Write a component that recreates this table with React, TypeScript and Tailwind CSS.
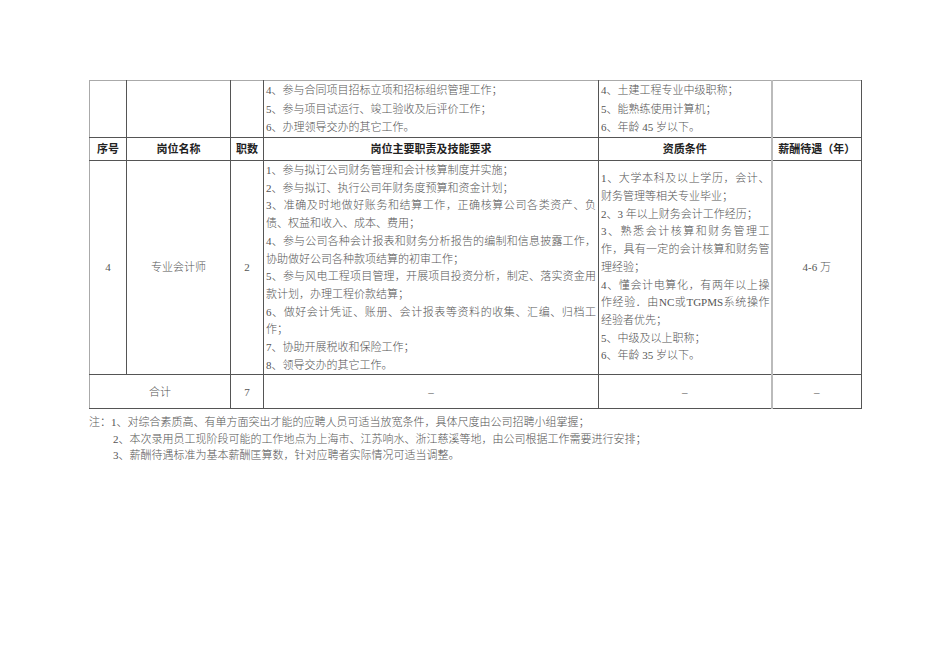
import React from "react";

const L = ({ j, children }: { j?: boolean; children: React.ReactNode }) => (
  <div className={j ? "text-justify [text-align-last:justify]" : "text-left"}>{children}</div>
);

const cell = "border border-[#555] p-0";

export default function App() {
  return (
    <div
      lang="zh-CN"
      className="w-[950px] h-[672px] bg-white pl-[89px] pt-[80px] font-['Liberation_Serif','Noto_Sans_CJK_SC',serif] text-[11px] text-[#555] font-light"
    >
      <table className="table-fixed border-collapse w-[772px]">
        <colgroup>
          <col className="w-[37px]" />
          <col className="w-[104px]" />
          <col className="w-[33px]" />
          <col className="w-[335px]" />
          <col className="w-[173px]" />
          <col className="w-[90px]" />
        </colgroup>
        <tbody>
          <tr className="h-[57px]">
            <td className={`${cell} border-l-[#aaa] border-t-[#aaa]`}></td>
            <td className={`${cell} border-t-[#aaa]`}></td>
            <td className={`${cell} border-t-[#aaa]`}></td>
            <td className={`${cell} border-t-[#aaa] align-middle pl-[2px] leading-[18.6px]`}>
              <L>4、参与合同项目招标立项和招标组织管理工作；</L>
              <L>5、参与项目试运行、竣工验收及后评价工作；</L>
              <L>6、办理领导交办的其它工作。</L>
            </td>
            <td className={`${cell} border-t-[#aaa] align-middle pl-[2px] leading-[18.6px]`}>
              <L>4、土建工程专业中级职称；</L>
              <L>5、能熟练使用计算机；</L>
              <L>6、年龄 45 岁以下。</L>
            </td>
            <td className={`${cell} border-t-[#aaa] border-l-2 border-l-[#bbb]`}></td>
          </tr>
          <tr className="h-[23px] font-bold text-[#222] text-center">
            <td className={`${cell} border-l-[#aaa]`}>序号</td>
            <td className={cell}>岗位名称</td>
            <td className={cell}>职数</td>
            <td className={cell}>岗位主要职责及技能要求</td>
            <td className={cell}>资质条件</td>
            <td className={`${cell} border-l-2 border-l-[#bbb]`}>薪酬待遇（年）</td>
          </tr>
          <tr className="h-[213px]">
            <td className={`${cell} border-l-[#aaa] text-center align-middle`}>4</td>
            <td className={`${cell} text-center align-middle`}>专业会计师</td>
            <td className={`${cell} text-center align-middle`}>2</td>
            <td className={`${cell} align-top pl-[2px] pr-[2px] pt-[1px] leading-[17.7px]`}>
              <L>1、参与拟订公司财务管理和会计核算制度并实施；</L>
              <L>2、参与拟订、执行公司年财务度预算和资金计划；</L>
              <L j>3、准确及时地做好账务和结算工作，正确核算公司各类资产、负</L>
              <L>债、权益和收入、成本、费用；</L>
              <L j>4、参与公司各种会计报表和财务分析报告的编制和信息披露工作，</L>
              <L>协助做好公司各种款项结算的初审工作；</L>
              <L j>5、参与风电工程项目管理，开展项目投资分析，制定、落实资金用</L>
              <L>款计划，办理工程价款结算；</L>
              <L j>6、做好会计凭证、账册、会计报表等资料的收集、汇编、归档工</L>
              <L>作；</L>
              <L>7、协助开展税收和保险工作；</L>
              <L>8、领导交办的其它工作。</L>
            </td>
            <td className={`${cell} align-middle pl-[2px] pr-[1px] leading-[17.7px]`}>
              <L j>1、大学本科及以上学历，会计、</L>
              <L>财务管理等相关专业毕业；</L>
              <L>2、3 年以上财务会计工作经历；</L>
              <L j>3、熟悉会计核算和财务管理工</L>
              <L j>作，具有一定的会计核算和财务管</L>
              <L>理经验；</L>
              <L j>4、懂会计电算化，有两年以上操</L>
              <L j>作经验．由NC或TGPMS系统操作</L>
              <L>经验者优先；</L>
              <L>5、中级及以上职称；</L>
              <L>6、年龄 35 岁以下。</L>
            </td>
            <td className={`${cell} border-l-2 border-l-[#bbb] text-center align-middle`}>4-6 万</td>
          </tr>
          <tr className="h-[34px] text-center">
            <td colSpan={2} className={`${cell} border-l-[#aaa]`}>合计</td>
            <td className={cell}>7</td>
            <td className={cell}>–</td>
            <td className={cell}>–</td>
            <td className={`${cell} border-l-2 border-l-[#bbb]`}>–</td>
          </tr>
        </tbody>
      </table>
      <div className="mt-[5px] leading-[16.5px]">
        <div>注：1、对综合素质高、有单方面突出才能的应聘人员可适当放宽条件，具体尺度由公司招聘小组掌握；</div>
        <div className="pl-[24px]">2、本次录用员工现阶段可能的工作地点为上海市、江苏响水、浙江慈溪等地，由公司根据工作需要进行安排；</div>
        <div className="pl-[24px]">3、薪酬待遇标准为基本薪酬匡算数，针对应聘者实际情况可适当调整。</div>
      </div>
    </div>
  );
}
